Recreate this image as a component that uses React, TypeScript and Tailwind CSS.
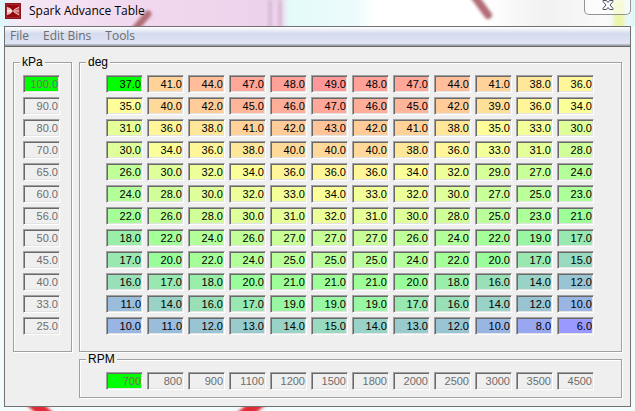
import React from "react";

const pressures = [100, 90, 80, 70, 65, 60, 56, 50, 45, 40, 33, 25];
const speeds = [700, 800, 900, 1100, 1200, 1500, 1800, 2000, 2500, 3000, 3500, 4500];

const advance = [
  [37, 41, 44, 47, 48, 49, 48, 47, 44, 41, 38, 36],
  [35, 40, 42, 45, 46, 47, 46, 45, 42, 39, 36, 34],
  [31, 36, 38, 41, 42, 43, 42, 41, 38, 35, 33, 30],
  [30, 34, 36, 38, 40, 40, 40, 38, 36, 33, 31, 28],
  [26, 30, 32, 34, 36, 36, 36, 34, 32, 29, 27, 24],
  [24, 28, 30, 32, 33, 34, 33, 32, 30, 27, 25, 23],
  [22, 26, 28, 30, 31, 32, 31, 30, 28, 25, 23, 21],
  [18, 22, 24, 26, 27, 27, 27, 26, 24, 22, 19, 17],
  [17, 20, 22, 24, 25, 25, 25, 24, 22, 20, 17, 15],
  [16, 17, 18, 20, 21, 21, 21, 20, 18, 16, 14, 12],
  [11, 14, 16, 17, 19, 19, 19, 17, 16, 14, 12, 10],
  [10, 11, 12, 13, 14, 15, 14, 13, 12, 10, 8, 6],
];

// blue -> green -> yellow -> red across the range of the table
const stops = [
  [153, 153, 255],
  [153, 255, 153],
  [255, 255, 153],
  [255, 153, 153],
];

const heatColor = (value: number) => {
  const position = ((value - 6) / 43) * 3;
  const index = Math.min(Math.floor(position), 2);
  const channels = stops[index].map((from, i) =>
    Math.round(from + (stops[index + 1][i] - from) * (position - index))
  );
  return `rgb(${channels.join(",")})`;
};

type CellProps = {
  label: string;
  value: string;
  color?: string;
  disabled?: boolean;
};

const Cell = ({ label, value, color = "#efefef", disabled }: CellProps) => (
  <input
    aria-label={label}
    defaultValue={value}
    disabled={disabled}
    style={{ backgroundColor: color }}
    className="block h-[18px] w-[37px] border border-t-[#a0a0a0] border-l-[#a0a0a0] border-r-white border-b-white p-px text-right text-[11px] leading-[14px] text-black shadow-[inset_1px_1px_0_#696969,inset_-1px_-1px_0_#e3e3e3] outline-none disabled:text-[#6d6d6d]"
  />
);

type GroupProps = {
  title: string;
  className?: string;
  bodyClassName?: string;
  children: React.ReactNode;
};

const Group = ({ title, className = "", bodyClassName = "", children }: GroupProps) => (
  <fieldset
    className={`min-w-0 border border-[#a0a0a0] shadow-[1px_1px_0_#fff,inset_1px_1px_0_#fff] ${className}`}
  >
    <legend className="ml-1.5 bg-[#efefef] px-0.5 text-[12px] leading-3">{title}</legend>
    <div className={`pt-[7px] ${bodyClassName}`}>{children}</div>
  </fieldset>
);

const Logo = () => (
  <svg width="16" height="16" viewBox="0 0 16 16" aria-hidden="true">
    <rect width="16" height="16" fill="#8b1518" />
    <rect x="1" y="1" width="14" height="14" fill="#a02a2c" />
    <rect x="2" y="2" width="12" height="12" fill="#98090d" />
    <path d="M2 4 5 5 8 8 5 11 2 12Z" fill="#f6e3df" />
    <path d="M14 4 11 5 8 8l3 3 3 1Z" fill="#c9605f" />
    <path d="M14 4 9 7M14 12 9 9M8 8h6" stroke="#efc4c0" fill="none" />
    <path d="M2 6h3M2 10h3" stroke="#d99a95" />
  </svg>
);

const Backdrop = () => (
  <svg
    className="absolute inset-0 -z-10 h-full w-full"
    viewBox="0 0 635 411"
    preserveAspectRatio="none"
    aria-hidden="true"
  >
    <defs>
      <linearGradient id="sky">
        <stop offset="0" stopColor="#dcf8fa" />
        <stop offset=".03" stopColor="#f4e8f5" />
        <stop offset=".2" stopColor="#f2d9ef" />
        <stop offset=".44" stopColor="#ecd2ea" />
        <stop offset=".455" stopColor="#e4fafa" />
        <stop offset=".56" stopColor="#ecfbfb" />
        <stop offset=".59" stopColor="#ffffff" />
        <stop offset=".76" stopColor="#ffffff" />
        <stop offset=".86" stopColor="#f1f1f1" />
        <stop offset=".95" stopColor="#fafafa" />
        <stop offset="1" stopColor="#e2f7f8" />
      </linearGradient>
      <filter id="soft" x="-10%" y="-10%" width="120%" height="120%">
        <feGaussianBlur stdDeviation="1.5" />
      </filter>
    </defs>
    <rect width="635" height="411" fill="#f2fcfc" />
    <rect width="635" height="27" fill="url(#sky)" />
    <g filter="url(#soft)" fill="none">
      <path d="M148 14 134 30" stroke="#b26d77" strokeWidth="7" strokeLinecap="round" />
      <path d="M270 0v28M280 0v28" stroke="#d9bcd8" strokeWidth="4" />
      <path d="M474-4 488 15" stroke="#b26d77" strokeWidth="8" strokeLinecap="round" />
      <path d="M619 0v28" stroke="#edf5ac" strokeWidth="11" />
      <path d="M30 400 50 418M262 400l-22 18" stroke="#e02a35" strokeWidth="12" />
    </g>
  </svg>
);

const App = () => {
  return (
    <div className="relative isolate min-h-screen overflow-hidden pr-1 pb-1 pl-1 font-['Liberation_Sans',Arial,sans-serif] text-black">
      <Backdrop />
      <header className="flex h-[26px] items-start justify-between">
        <div className="flex items-center gap-2 pt-[3px] pl-px">
          <Logo />
          <h1 className="font-['Open_Sans','Noto_Sans',sans-serif] text-[12px] leading-4">
            Spark Advance Table
          </h1>
        </div>
        <button
          aria-label="Close"
          className="flex h-[15px] w-[47px] justify-center rounded-b-[5px] border border-t-0 border-[#949494] bg-white/50"
        >
          <svg width="14" height="12" viewBox="0 0 14 12" aria-hidden="true">
            <path
              d="M2 .5h3.500L7 2.500 8.500.5H12V1.500L9 5l3 3.500v1H8.500L7 7.500 5.500 9.500H2v-1L5 5 2 1.500Z"
              fill="#fff"
              stroke="#4b5060"
            />
          </svg>
        </button>
      </header>

      <main className="border border-[#727272] bg-[#efefef]">
        <nav className="flex h-[18px] gap-3.5 border-b border-[#b5bdd0] bg-linear-to-b from-white via-[#d5dbed] via-40% to-[#e0e6f5] pl-[5px] font-['Open_Sans','Noto_Sans',sans-serif] text-[12px] leading-4 text-[#6d6d6d]">
          <button>File</button>
          <button>Edit Bins</button>
          <button>Tools</button>
        </nav>
        <div className="h-0.5 border-b border-[#696969] bg-[#a0a0a0]" />

        <div className="grid grid-cols-[59px_1fr] gap-x-[7px] gap-y-px px-2 pt-[9px] pb-2">
          <Group title="kPa" bodyClassName="pb-4 pl-[9px]">
            <div className="grid gap-1">
              {pressures.map((kpa, i) => (
                <Cell
                  key={kpa}
                  label={`Pressure bin ${i + 1}`}
                  value={kpa.toFixed(1)}
                  color={i === 0 ? "#00ff00" : undefined}
                  disabled
                />
              ))}
            </div>
          </Group>

          <Group title="deg" bodyClassName="pb-4 pl-[26px]">
            <table className="border-collapse">
              <tbody>
                {advance.map((row, r) => (
                  <tr key={pressures[r]}>
                    {row.map((deg, c) => (
                      <td key={speeds[c]} className={r < 11 ? "p-0 pr-1 pb-1" : "p-0 pr-1"}>
                        <Cell
                          label={`${pressures[r]} kPa at ${speeds[c]} RPM`}
                          value={deg.toFixed(1)}
                          color={r === 0 && c === 0 ? "#00ff00" : heatColor(deg)}
                        />
                      </td>
                    ))}
                  </tr>
                ))}
              </tbody>
            </table>
          </Group>

          <Group title="RPM" className="col-start-2" bodyClassName="pb-[7px] pl-[26px]">
            <div className="flex gap-1">
              {speeds.map((rpm, i) => (
                <Cell
                  key={rpm}
                  label={`Speed bin ${i + 1}`}
                  value={String(rpm)}
                  color={i === 0 ? "#00ff00" : undefined}
                  disabled
                />
              ))}
            </div>
          </Group>
        </div>
      </main>
    </div>
  );
};

export default App;
